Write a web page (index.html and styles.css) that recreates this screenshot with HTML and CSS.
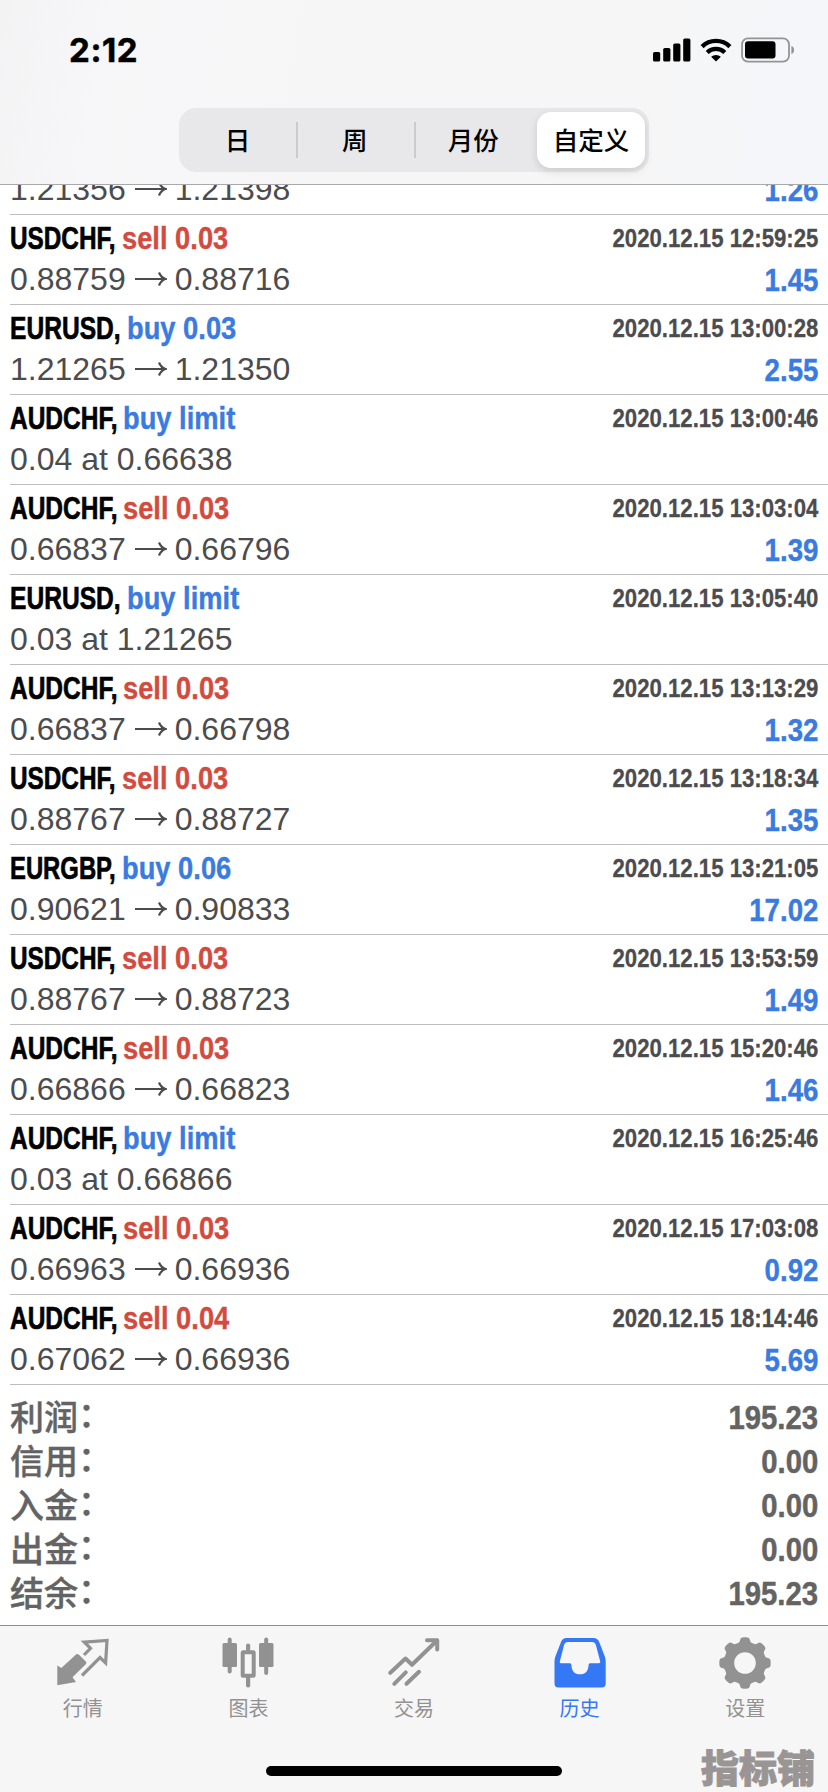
FILE: index.html
```html
<!DOCTYPE html>
<html lang="zh-CN">
<head>
<meta charset="utf-8">
<title>历史</title>
<link rel="stylesheet" href="styles.css">
</head>
<body>
<div class="app">
  <header class="header">
    <div class="status">
      <span class="clock">2:12</span>
      <div class="status-icons">
        <svg class="signal" width="38" height="24" viewBox="0 0 38 24"><rect x="0" y="14" width="7.2" height="9.5" rx="1.6"/><rect x="10.2" y="10" width="7.2" height="13.5" rx="1.6"/><rect x="20.2" y="5.5" width="7.2" height="18" rx="1.6"/><rect x="30.2" y="0.5" width="7.2" height="23" rx="1.6"/></svg>
        <svg class="wifi" width="32" height="24" viewBox="0 0 32 24"><path d="M2.1 8.6a19.8 19.8 0 0 1 27.8 0" fill="none" stroke="#000" stroke-width="4.4"/><path d="M7.2 14.4a12.6 12.6 0 0 1 17.6 0" fill="none" stroke="#000" stroke-width="4.2"/><path d="M16 23.4l-4.9-4.6a7.2 7.2 0 0 1 9.8 0z"/></svg>
        <svg class="battery" width="54" height="26" viewBox="0 0 54 26"><rect x="1" y="1.3" width="47" height="23.4" rx="6" fill="none" stroke="#949496" stroke-width="1.8"/><rect x="4" y="4.3" width="30.5" height="17.2" rx="3"/><path d="M50.4 9c3.6 1 3.6 7 0 8z" fill="#949496"/></svg>
      </div>
    </div>
    <nav class="segments">
      <span class="segment">日</span>
      <span class="segment divided">周</span>
      <span class="segment divided">月份</span>
      <span class="segment active">自定义</span>
    </nav>
  </header>

  <main class="content">
    <ul class="deals" id="deals"></ul>
    <dl class="totals">
      <div class="total"><dt>利润<span class="colon">：</span></dt><dd>195.23</dd></div>
      <div class="total"><dt>信用<span class="colon">：</span></dt><dd>0.00</dd></div>
      <div class="total"><dt>入金<span class="colon">：</span></dt><dd>0.00</dd></div>
      <div class="total"><dt>出金<span class="colon">：</span></dt><dd>0.00</dd></div>
      <div class="total"><dt>结余<span class="colon">：</span></dt><dd>195.23</dd></div>
    </dl>
  </main>

  <footer class="footer">
    <nav class="tabs">
      <a class="tab"><svg width="52" height="52" viewBox="0 0 52 52"><path d="M0.3 28.5L4.3 31 19 17.5Q20.5 16.3 22 17.7L29 24.8Q30 26 28.8 27.2L15.5 40.3 19 45 0.3 48.3z"/><path d="M27 18L33.5 11.3 27.3 5.2 50 3.5 48.6 26 43 20.5 25 38.5" fill="none" stroke="currentColor" stroke-width="3.2"/></svg><span>行情</span></a>
      <a class="tab"><svg width="52" height="52" viewBox="0 0 52 52"><rect x="0.5" y="6" width="14.5" height="24" rx="1.5"/><rect x="5.7" y="0.5" width="4" height="36" rx="2"/><rect x="37" y="6" width="14.5" height="24" rx="1.5"/><rect x="42.2" y="0.5" width="4" height="37.5" rx="2"/><rect x="20.7" y="15.2" width="11" height="23.5" rx="0.5" fill="none" stroke="currentColor" stroke-width="4"/><rect x="24" y="6.5" width="4.2" height="8" rx="2"/><rect x="24" y="39" width="4.2" height="11.5" rx="2"/></svg><span>图表</span></a>
      <a class="tab"><svg width="52" height="52" viewBox="0 0 52 52"><g fill="none" stroke="currentColor" stroke-width="4" stroke-linecap="round" stroke-linejoin="round"><path d="M2.3 35.8L17.5 21.5 24 27.8 49 3.5"/><path d="M39 3.3H49.2V12.5"/><path d="M6.3 46.8L17.8 35.3M18.5 46.8L31 34.8"/></g></svg><span>交易</span></a>
      <a class="tab active"><svg width="52" height="52" viewBox="0 0 52 52"><path fill-rule="evenodd" d="M12.5 1H39.5Q43.5 1 45 4.5L51 20Q51.7 22 51.7 25V46.5Q51.7 50.5 47.7 50.5H4.5Q0.5 50.5 0.5 46.5V25Q0.5 22 1.2 20L7.2 4.5Q8.6 1 12.5 1zM13.5 5Q11 5 10.2 7.5L5.8 24.5Q5.4 26.2 7 26.2H16Q17.4 26.2 17.4 28C17.6 34 20.5 37.3 26 37.3S34.4 34 34.6 28Q34.6 26.2 36 26.2H45Q46.6 26.2 46.2 24.5L41.8 7.5Q41 5 38.5 5z"/></svg><span>历史</span></a>
      <a class="tab"><svg width="52" height="52" viewBox="0 0 52 52"><path id="gear" fill-rule="evenodd" d=""/></svg><span>设置</span></a>
    </nav>
    <div class="home-indicator"></div>
  </footer>
  <div class="watermark">指标铺</div>
</div>
<script src="app.js"></script>
</body>
</html>
```
FILE: app.js
```js
const deals = [
  ['EURUSD', 'buy', '0.03', '1.21356', '1.21398', '2020.12.15 12:59:03', '1.26'],
  ['USDCHF', 'sell', '0.03', '0.88759', '0.88716', '2020.12.15 12:59:25', '1.45'],
  ['EURUSD', 'buy', '0.03', '1.21265', '1.21350', '2020.12.15 13:00:28', '2.55'],
  ['AUDCHF', 'buy', 'limit', '0.04 at 0.66638', '', '2020.12.15 13:00:46', ''],
  ['AUDCHF', 'sell', '0.03', '0.66837', '0.66796', '2020.12.15 13:03:04', '1.39'],
  ['EURUSD', 'buy', 'limit', '0.03 at 1.21265', '', '2020.12.15 13:05:40', ''],
  ['AUDCHF', 'sell', '0.03', '0.66837', '0.66798', '2020.12.15 13:13:29', '1.32'],
  ['USDCHF', 'sell', '0.03', '0.88767', '0.88727', '2020.12.15 13:18:34', '1.35'],
  ['EURGBP', 'buy', '0.06', '0.90621', '0.90833', '2020.12.15 13:21:05', '17.02'],
  ['USDCHF', 'sell', '0.03', '0.88767', '0.88723', '2020.12.15 13:53:59', '1.49'],
  ['AUDCHF', 'sell', '0.03', '0.66866', '0.66823', '2020.12.15 15:20:46', '1.46'],
  ['AUDCHF', 'buy', 'limit', '0.03 at 0.66866', '', '2020.12.15 16:25:46', ''],
  ['AUDCHF', 'sell', '0.03', '0.66963', '0.66936', '2020.12.15 17:03:08', '0.92'],
  ['AUDCHF', 'sell', '0.04', '0.67062', '0.66936', '2020.12.15 18:14:46', '5.69']
];
const arrow = '<svg class="arrow" width="32" height="16" viewBox="0 0 32 16"><path d="M0 8H30M24 1.5Q26 6.5 30.5 8 26 9.5 24 14.5"/></svg>';
document.getElementById('deals').innerHTML = deals.map(([symbol, side, size, from, to, time, profit]) => `
  <li class="deal">
    <div class="title"><span class="symbol ${symbol.toLowerCase()}">${symbol},</span><span class="side ${side}">${side} ${size}</span></div>
    <time class="time">${time}</time>
    <div class="price">${from}${to ? arrow + to : ''}</div>
    <div class="profit">${profit}</div>
  </li>`).join('');

// Eight-lobed gear with a round hole in the middle.
const points = [];
for (let i = 0; i <= 240; i++) {
  const a = i / 240 * Math.PI * 2;
  const c = Math.cos(8 * a);
  const r = 23.4 + 2.3 * Math.tanh(2.4 * c + 0.3);
  points.push((26 + r * Math.cos(a)).toFixed(2) + ' ' + (26 + r * Math.sin(a)).toFixed(2));
}
document.getElementById('gear').setAttribute('d', 'M' + points.join('L') + 'ZM26 15.2a10.8 10.8 0 1 0 0 21.6a10.8 10.8 0 1 0 0-21.6z');
```
FILE: styles.css
```css
* { box-sizing: border-box; }
body, ul, dl, dd { margin: 0; padding: 0; }
body { background: #fff; font-family: "Liberation Sans", "Noto Sans CJK SC", sans-serif; }
.app { position: relative; display: flex; flex-direction: column; width: 828px; height: 1792px; overflow: hidden; }

.header { flex: none; height: 185px; border-bottom: 1px solid #a9a9ab; background: linear-gradient(100deg, #f3f3f4 0%, #f7f7f9 14%, #f6f6f6 45%, #f6f6f7 80%, #f4f6fb 100%); display: flex; flex-direction: column; align-items: center; }
.status { width: 100%; height: 108px; padding: 29px 33px 0 69px; display: flex; justify-content: space-between; align-items: flex-start; }
.clock { font: 700 33px/42px Inter, sans-serif; letter-spacing: 0.6px; -webkit-text-stroke: 0.5px; }
.status-icons { display: flex; align-items: center; padding-top: 8px; }
.wifi { margin-left: 9px; }
.battery { margin-left: 9px; }
.segments { display: flex; width: 470px; height: 64px; padding: 4px; border-radius: 17px; background: #e8e8ea; font: 500 25.5px/54px "Noto Sans CJK SC", sans-serif; text-align: center; }
.segment { width: 117.5px; flex: none; display: block; background: linear-gradient(#cbcbce, #cbcbce) no-repeat -10px 50% / 2px 36px; }
.segment:first-child { width: 113px; padding-right: 4px; }
.divided { background-position: 0 50%; }
.divided + .divided { padding-left: 2px; }
.segment.active { width: 108px; margin-left: 6px; border-radius: 14px; background: #fff; box-shadow: 0 3px 8px rgba(0,0,0,.13); }

.content { flex: 1; min-height: 0; overflow: hidden; }
.deals { list-style: none; margin: -60px 0 0 10px; }
.deal { height: 90px; padding-top: 3px; border-bottom: 1px solid #bdbdbf; display: grid; grid-template: 40px 42px / 1fr auto; color: #4c4c4e; }
.title { font-weight: 700; font-size: 32px; line-height: 40px; white-space: nowrap; -webkit-text-stroke: 0.4px; }
.symbol, .side { display: inline-block; transform-origin: 0 50%; }
.symbol { width: 112px; color: #000; transform: scaleX(.76); -webkit-text-stroke: 0.7px; }
.eurusd { width: 117px; transform: scaleX(.768); }
.audchf { width: 113px; transform: scaleX(.765); }
.eurgbp { width: 112px; transform: scaleX(.745); }
.side { transform: scaleX(.853); }
.buy { color: #3a7be0; }
.sell { color: #d24b3e; }
.time { padding-right: 10px; font-weight: 700; font-size: 26px; line-height: 40px; transform: scaleX(.853); transform-origin: calc(100% - 10px) 50%; text-align: right; -webkit-text-stroke: 0.3px; }
.price { font-size: 32px; line-height: 42px; white-space: nowrap; }
.arrow { margin: 0 8px 0 9px; vertical-align: 3px; fill: none; stroke: #4c4c4e; stroke-width: 2.2; }
.profit { padding-right: 10px; color: #3a7be0; font-weight: 700; font-size: 32px; line-height: 44px; text-align: right; transform: scaleX(.865); transform-origin: calc(100% - 10px) 50%; -webkit-text-stroke: 0.4px; }

.totals { padding: 9px 10px 0; color: #636363; }
.total { height: 44px; display: flex; justify-content: space-between; }
.total dt { font: 500 34px/43px "Noto Sans CJK SC", sans-serif; -webkit-text-stroke: 0.4px; }
.colon { position: relative; top: -3px; }
.total dd { font-weight: 700; font-size: 34px; line-height: 46px; transform: scaleX(.86); transform-origin: 100% 50%; -webkit-text-stroke: 0.5px; }

.footer { flex: none; height: 167px; border-top: 1px solid #8e8e90; background: #f6f6f6; display: flex; flex-direction: column; align-items: center; }
.tabs { width: 100%; height: 140px; padding: 11px 0 0; display: grid; grid-template-columns: repeat(5, 1fr); }
.tab { display: flex; flex-direction: column; align-items: center; color: #929292; font: 400 20px/28px "Noto Sans CJK SC", sans-serif; }
.tab svg { fill: currentColor; margin-bottom: 5px; }
.tab.active { color: #3478f6; }
.home-indicator { width: 296px; height: 10px; border-radius: 5px; background: #000; }
.watermark { position: absolute; right: 13px; bottom: 5px; color: #999594; font: 900 38px/42px "Noto Sans CJK SC", sans-serif; -webkit-text-stroke: 1px; }
```
